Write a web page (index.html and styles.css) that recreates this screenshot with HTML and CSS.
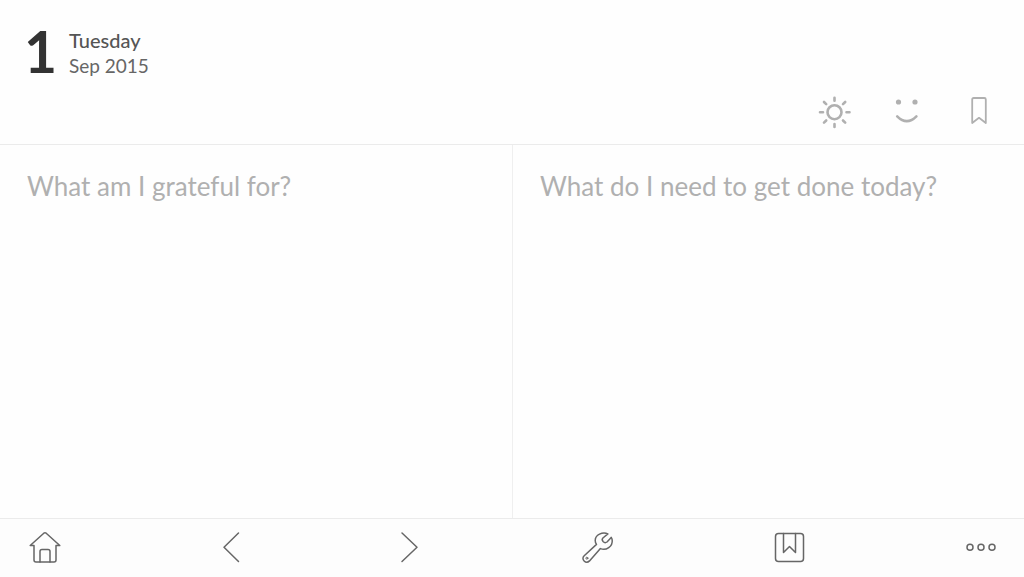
FILE: index.html
```html
<!DOCTYPE html>
<html lang="en">
  <head>
    <meta charset="utf-8" />
    <meta name="viewport" content="width=device-width, initial-scale=1" />
    <title>Journal</title>
    <link rel="stylesheet" href="styles.css">
  </head>
  <body>
    <header class="header">
      <div class="date">
        <span class="day">1</span>
        <div>
          <div class="weekday">Tuesday</div>
          <div class="month">Sep 2015</div>
        </div>
      </div>
      <div class="tools">
        <button type="button" aria-label="Weather">
          <svg width="32" height="32" viewBox="0 0 32 32" stroke-width="2.6">
            <circle cx="15.5" cy="16.2" r="7" />
            <path d="M15.5 1.7v3M15.5 28v3M1 16.200h3M27.500 16.200h3M5 6l2.200 2.200M24 24.500l2.200 2.200M5 26.700l2.200-2.200M24 8.200L26.200 6" />
          </svg>
        </button>
        <button type="button" aria-label="Mood">
          <svg width="32" height="32" viewBox="0 0 32 32" stroke-width="2.6">
            <circle class="dot" cx="7.5" cy="6" r="2.6" />
            <circle class="dot" cx="24" cy="6" r="2.6" />
            <path d="M6.2 20.400q9.600 9.600 19.200 0" />
          </svg>
        </button>
        <button type="button" aria-label="Bookmark">
          <svg width="32" height="32" viewBox="0 0 32 32" stroke-width="1.8">
            <path d="M9.200 27V3.500q0-1.500 1.500-1.500h10.600q1.500 0 1.500 1.500V27L16 21.800z" />
          </svg>
        </button>
      </div>
    </header>

    <main class="entries">
      <textarea aria-label="Gratitude" placeholder="What am I grateful for?"></textarea>
      <textarea aria-label="To do" placeholder="What do I need to get done today?"></textarea>
    </main>

    <nav class="toolbar">
      <button type="button" aria-label="Home">
        <svg width="32" height="32" viewBox="0 0 32 32">
          <path d="M5 14.500H1.200L14.800 2.200q1.200-1 2.400 0L30.800 14.500H27V29q0 2-2 2H7q-2 0-2-2z" />
          <path d="M11 31V20.500q0-2 2-2h6q2 0 2 2V31" />
        </svg>
      </button>
      <button type="button" aria-label="Previous day">
        <svg width="16" height="32" viewBox="0 0 16 32">
          <path d="M15.500 2L1 16.200 15.500 30.500" />
        </svg>
      </button>
      <button type="button" aria-label="Next day">
        <svg width="16" height="32" viewBox="0 0 16 32">
          <path d="M1 2L16 16.200 1 30.500" />
        </svg>
      </button>
      <button type="button" aria-label="Settings">
        <svg width="32" height="32" viewBox="-1 0 32 32">
          <path d="M26.900 2.900C21.500.6 14.200 3.700 14.200 9.500q0 2 1.300 3.900L3.200 24.700c-3.700 3.600 1.700 8.800 5.300 5.200L19.400 17.600c5.800 2.500 12.500-2.300 11.800-8.500q-.1-1.500-1-2.700L26 11q-2 1.400-3.700-.2-2-2-.4-3.800z" />
          <circle cx="5.9" cy="27.2" r="1" stroke-width="1" />
        </svg>
      </button>
      <button type="button" aria-label="Journals">
        <svg width="30" height="32" viewBox="0 0 30 32">
          <rect x="1.5" y="2.5" width="28" height="28" rx="3" />
          <path d="M9.500 2.500v19l6-6 6 6v-19" />
        </svg>
      </button>
      <button type="button" aria-label="More">
        <svg width="30" height="32" viewBox="0 0 30 32">
          <circle cx="4" cy="16.3" r="3" />
          <circle cx="15" cy="16.3" r="3" />
          <circle cx="26" cy="16.3" r="3" />
        </svg>
      </button>
    </nav>
  </body>
</html>
```
FILE: styles.css
```css
* {
  box-sizing: border-box;
}
body {
  margin: 0;
  min-height: 100vh;
  display: flex;
  flex-direction: column;
  background-color: #fefefe;
  color: #666;
  font-family: Lato, 'Open Sans', sans-serif;
}
button {
  display: flex;
  padding: 0;
  border: 0;
  background: none;
  color: inherit;
  cursor: pointer;
}
svg {
  display: block;
  overflow: visible;
  fill: none;
  stroke: currentColor;
  stroke-linecap: round;
  stroke-linejoin: round;
}

.header {
  padding: 28px 29px 16px 24px;
}
.date {
  display: flex;
  align-items: flex-start;
  gap: 12px;
  height: 52px;
  font-size: 20px;
  line-height: 25px;
}
.day {
  width: 33px;
  font-size: 57px;
  font-weight: bold;
  line-height: 46px;
  color: #333;
}
.weekday {
  color: #555;
  font-weight: 500;
}
.month {
  color: #666;
  font-size: 19px;
}
.tools {
  display: flex;
  justify-content: flex-end;
  gap: 40px;
  margin-top: 16px;
  color: #b0b0b0;
}
.dot {
  fill: currentColor;
  stroke: none;
}

.entries {
  flex: 1;
  display: grid;
  grid-template-columns: 1fr 1fr;
  border-top: 1px solid #ebebeb;
}
textarea {
  width: 100%;
  padding: 25px 27px;
  border: 0;
  outline: 0;
  resize: none;
  background: none;
  color: #666;
  font: 26px/32px Lato, 'Open Sans', sans-serif;
}
textarea + textarea {
  border-left: 1px solid #efefef;
}
textarea::placeholder {
  color: #b0b0b0;
  opacity: 1;
}

.toolbar {
  display: flex;
  justify-content: space-between;
  padding: 12px 28px 14px 29px;
  border-top: 1px solid #ebebeb;
  background-color: #fdfdfd;
  color: #666;
}
.toolbar svg {
  stroke-width: 1.5;
}
```
